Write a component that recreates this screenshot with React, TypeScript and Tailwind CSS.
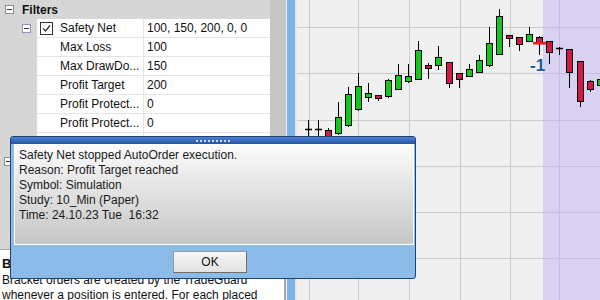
import React from 'react';

type Candle = [number, number, number, number, number, 'g' | 'r' | 'd'];

// x, wickTop, wickBottom, bodyTop, bodyBottom, kind (page coordinates)
const candles: Candle[] = [
  [308, 120, 137, 129, 129, 'd'],
  [318, 120, 137, 129, 129, 'd'],
  [328, 128, 150, 130, 150, 'r'],
  [338, 102, 135, 117, 133, 'g'],
  [348, 87, 127, 94, 125, 'g'],
  [358, 73, 111, 86, 109, 'g'],
  [368, 83, 102, 93, 97, 'g'],
  [378, 95, 101, 95, 98, 'r'],
  [388, 79, 98, 80, 96, 'g'],
  [398, 64, 90, 75, 89, 'g'],
  [408, 64, 83, 76, 81, 'g'],
  [418, 41, 80, 50, 79, 'g'],
  [428, 63, 79, 65, 68, 'r'],
  [438, 46, 70, 57, 65, 'g'],
  [449, 62, 88, 62, 83, 'r'],
  [459, 73, 88, 73, 79, 'r'],
  [469, 64, 77, 69, 76, 'g'],
  [479, 55, 72, 60, 72, 'g'],
  [489, 27, 67, 43, 65, 'g'],
  [499, 9, 55, 16, 54, 'g'],
  [509, 35, 47, 35, 38, 'r'],
  [519, 37, 51, 37, 44, 'r'],
  [529, 27, 41, 34, 41, 'g'],
  [539, 36, 55, 37, 42, 'r'],
  [549, 41, 64, 41, 52, 'r'],
  [559, 47, 55, 48, 48, 'd'],
  [569, 49, 88, 49, 72, 'r'],
  [580, 61, 107, 61, 101, 'r'],
  [590, 80, 92, 81, 89, 'r'],
  [600, 77, 87, 79, 85, 'g'],
];

const X0 = 297;

function Chart() {
  const vLines = [309, 358, 409, 460, 510, 559];
  const hLines = [27, 73, 120, 166, 212, 258];
  return (
    <svg width="303" height="300" className="block">
      <rect x="0" y="0" width="303" height="300" fill="#f0f0f0" />
      <rect x={543 - X0} y="0" width="60" height="300" fill="#d8d1f1" />
      {vLines.map((x) => (
        <line
          key={x}
          x1={x - X0 + 0.5}
          x2={x - X0 + 0.5}
          y1="0"
          y2="300"
          stroke={x > 543 ? '#c6bfe0' : '#cacaca'}
        />
      ))}
      {hLines.map((y) => (
        <g key={y}>
          <line x1="0" x2={543 - X0} y1={y + 0.5} y2={y + 0.5} stroke="#cacaca" />
          <line x1={543 - X0} x2="303" y1={y + 0.5} y2={y + 0.5} stroke="#c6bfe0" />
        </g>
      ))}
      {candles.map(([x, wt, wb, bt, bb, k]) => {
        const cx = x - X0 + 0.5;
        return (
          <g key={x}>
            <line x1={cx} x2={cx} y1={wt} y2={wb} stroke="#000" />
            {k === 'd' ? (
              <line x1={cx - 3.5} x2={cx + 3.5} y1={bt + 0.5} y2={bt + 0.5} stroke="#000" strokeWidth="1.5" />
            ) : (
              <rect
                x={cx - 3}
                y={bt + 0.5}
                width="6"
                height={Math.max(bb - bt, 2)}
                fill={k === 'g' ? '#12c81a' : '#d21a48'}
                stroke="#000"
              />
            )}
          </g>
        );
      })}
      <rect x={533 - X0} y="42" width="13" height="2.5" fill="#f01818" />
      <text
        x={530 - X0}
        y="71"
        fontFamily="'Liberation Sans', Arial, sans-serif"
        fontWeight="bold"
        fontSize="17"
        fill="#1f5aa6"
      >
        -1
      </text>
    </svg>
  );
}

function MinusBox({ tint = false }: { tint?: boolean }) {
  return (
    <span
      className={`flex h-[9px] w-[9px] items-center justify-center border bg-white ${
        tint ? 'border-[#9292c4]' : 'border-[#8e8e8e]'
      }`}
    >
      <span className="h-px w-[5px] bg-[#333]" />
    </span>
  );
}

const rows: [string, string][] = [
  ['Max Loss', '100'],
  ['Max DrawDo...', '150'],
  ['Profit Target', '200'],
  ['Profit Protect...', '0'],
  ['Profit Protect...', '0'],
  ['', ''],
];

function PropertyGrid() {
  return (
    <div className="flex w-[270px] flex-col bg-[#d6d6d6] text-[12px] text-[#111]">
      <div className="flex h-[19px] items-center pl-[5px]">
        <MinusBox />
        <span className="ml-[8px] font-bold">Filters</span>
      </div>
      <div className="flex h-[19px]">
        <div className="flex w-[37px] items-center justify-end pr-[6px]">
          <MinusBox tint />
        </div>
        <div className="flex w-[106px] items-center border-b border-[#e4e4e4] bg-white pl-[3px]">
          <span className="flex h-[13px] w-[13px] items-center justify-center border border-[#333] bg-white">
            <svg width="9" height="9" viewBox="0 0 9 9">
              <path d="M1 4.5 L3.5 7 L8 1.5" fill="none" stroke="#333" strokeWidth="1.3" />
            </svg>
          </span>
          <span className="ml-[7px]">Safety Net</span>
        </div>
        <div className="flex flex-1 items-center border-b border-l border-[#e4e4e4] bg-white pl-[3px]">
          100, 150, 200, 0, 0
        </div>
      </div>
      {rows.map(([name, value], i) => (
        <div key={i} className="flex h-[19px]">
          <div className="w-[37px]" />
          <div className="flex w-[106px] items-center border-b border-[#e4e4e4] bg-white pl-[23px] whitespace-nowrap">
            {name}
          </div>
          <div className="flex flex-1 items-center border-b border-l border-[#e4e4e4] bg-white pl-[3px]">
            {value}
          </div>
        </div>
      ))}
      <div className="flex h-[19px] items-center pl-[4px]">
        <MinusBox />
      </div>
    </div>
  );
}

function Dialog() {
  return (
    <div className="absolute left-[10px] top-[136px] flex h-[143px] w-[406px] flex-col rounded-t-[3px] rounded-br-[3px] border border-[#22406c] bg-[#8bbbe8]">
      <div className="flex h-[7px] items-center justify-center gap-[2px] rounded-t-[2px] bg-gradient-to-b from-[#4d82d6] to-[#2552a6]">
        {Array.from({ length: 9 }).map((_, i) => (
          <span key={i} className="h-[2px] w-[2px] bg-[#c9def8]" />
        ))}
      </div>
      <div className="ml-[3px] mr-[1px] h-[101px] border border-white bg-gradient-to-b from-[#fbfbfb] to-[#c6c6c6] pl-[4px] pt-[3px] text-[12px] leading-[15px] text-[#1a1a1a] whitespace-pre">
        <div>Safety Net stopped AutoOrder execution.</div>
        <div>Reason: Profit Target reached</div>
        <div>Symbol: Simulation</div>
        <div>Study: 10_Min (Paper)</div>
        <div>Time: 24.10.23 Tue  16:32</div>
      </div>
      <div className="flex flex-1 items-center pl-[162px]">
        <button className="h-[22px] w-[74px] border border-[#9a9a9a] border-b-[#6e6e6e] border-r-[#6e6e6e] bg-gradient-to-b from-[#f6f6f6] to-[#e2e2e2] text-[12px] text-[#111]">
          OK
        </button>
      </div>
    </div>
  );
}

export default function App() {
  return (
    <div className="relative flex h-[300px] w-[600px] overflow-hidden bg-[#d6d6d6] font-['Liberation_Sans',Arial,sans-serif]">
      <div className="flex w-[286px] flex-col">
        <div className="flex h-[249px]">
          <PropertyGrid />
          <div className="w-[16px] bg-[#c6c6c6]" />
        </div>
        <div className="flex h-[51px] border-t border-[#a8a8a8]">
          <div className="w-[284px] bg-white pl-[2px] pt-[6px] text-[12px] text-[#111]">
            <div className="text-[13px] leading-[15px] font-bold">Bracket Orders</div>
            <div className="mt-[2px] leading-[15px]">
              Bracket orders are created by the TradeGuard whenever a position is entered. For each placed order a stop
              and a limit order are created.
            </div>
          </div>
          <div className="w-[2px] bg-[#a8a8a8]" />
        </div>
      </div>
      <div className="w-px bg-[#ececec]" />
      <div className="w-[8px] bg-[#80b4e8]" />
      <div className="w-[2px] bg-[#e6e6e6]" />
      <Chart />
      <Dialog />
    </div>
  );
}
